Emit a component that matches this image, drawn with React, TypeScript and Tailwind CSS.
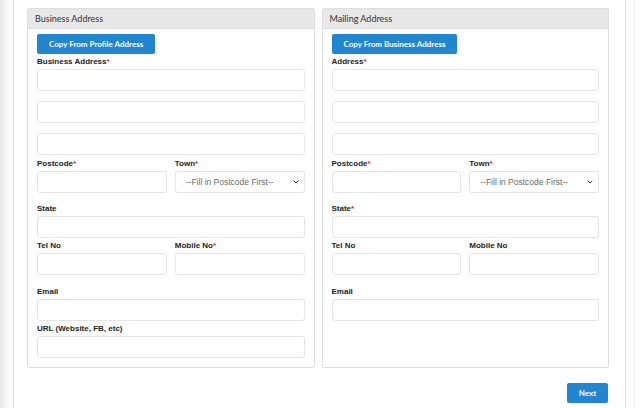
import { ChevronDown } from 'lucide-react';

type FieldProps = {
  label: string;
  required?: boolean;
  select?: boolean;
  className?: string;
};

function Field({ label, required, select, className = '' }: FieldProps) {
  return (
    <div className={className}>
      <label className="block font-['Liberation_Sans',Arial,sans-serif] text-[8px] font-bold leading-[12px] text-[#222]">
        {label}
        {required && <span className="text-[#e02424]">*</span>}
      </label>
      {select ? (
        <div className="mt-px flex h-[22px] items-center justify-between rounded-[3px] border border-[#e4e4e4] bg-white pl-[10px] pr-[4px]">
          <span className="font-['Liberation_Sans',Arial,sans-serif] text-[8.5px] text-[#6b6b6b]">
            --Fill in Postcode First--
          </span>
          <ChevronDown size={8} strokeWidth={3} className="text-[#333]" />
        </div>
      ) : (
        <input className="mt-px block h-[22px] w-full rounded-[3px] border border-[#e4e4e4] bg-white outline-none" />
      )}
    </div>
  );
}

function Panel({
  title,
  copyLabel,
  addressLabel,
  stateRequired,
  mobileRequired,
  showUrl,
}: {
  title: string;
  copyLabel: string;
  addressLabel: string;
  stateRequired?: boolean;
  mobileRequired?: boolean;
  showUrl?: boolean;
}) {
  return (
    <div className="flex flex-col rounded-[2px] border border-[#dedede] bg-white">
      {/* Header */}
      <div className="flex h-[20px] items-center border-b border-[#dedede] bg-[#e8e8e8] pl-[7px] font-['Lato',sans-serif] text-[9px] text-[#333]">
        {title}
      </div>

      <div className="px-[9px] pt-[5px] pb-[9px]">
        <button className="block h-[20px] rounded-[2px] bg-[#2185d0] px-[12px] font-['Lato',sans-serif] text-[8px] font-bold text-white">
          {copyLabel}
        </button>

        <Field label={addressLabel} required className="mt-[2px]" />
        <input className="mt-[10px] block h-[22px] w-full rounded-[3px] border border-[#e4e4e4] bg-white outline-none" />
        <input className="mt-[10px] block h-[22px] w-full rounded-[3px] border border-[#e4e4e4] bg-white outline-none" />

        <div className="mt-[3px] grid grid-cols-2 gap-x-[8px]">
          <Field label="Postcode" required />
          <Field label="Town" required select />
        </div>

        <Field label="State" required={stateRequired} className="mt-[10px]" />

        <div className="mt-[2px] grid grid-cols-2 gap-x-[8px]">
          <Field label="Tel No" />
          <Field label="Mobile No" required={mobileRequired} />
        </div>

        <Field label="Email" className="mt-[11px]" />
        {showUrl && <Field label="URL (Website, FB, etc)" className="mt-[2px]" />}
      </div>
    </div>
  );
}

export default function App() {
  return (
    <div className="flex h-[408px] w-[639px] overflow-hidden bg-white">
      <div className="w-[10px] bg-gradient-to-r from-[#e8e8e8] to-white" />
      <div className="w-[625px] border-r border-[#efefef] pl-[3px] pr-[8px]">
        <div className="h-full border-x border-[#e3e3e3] pt-[8px] pl-[13px] pr-[16px]">
          <div className="grid grid-cols-2 gap-x-[7px]">
            <Panel
              title="Business Address"
              copyLabel="Copy From Profile Address"
              addressLabel="Business Address"
              mobileRequired
              showUrl
            />
            <Panel
              title="Mailing Address"
              copyLabel="Copy From Business Address"
              addressLabel="Address"
              stateRequired
            />
          </div>

          <div className="mt-[15px] flex justify-end pr-px">
            <button className="h-[20px] w-[41px] rounded-[2px] bg-[#2185d0] font-['Lato',sans-serif] text-[8px] font-bold text-white">
              Next
            </button>
          </div>
        </div>
      </div>
    </div>
  );
}
